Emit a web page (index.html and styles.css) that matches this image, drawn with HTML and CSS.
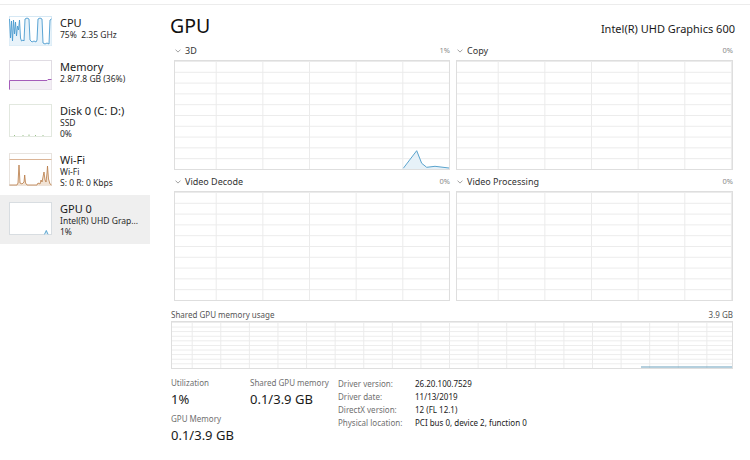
FILE: index.html
```html
<!DOCTYPE html>
<html>
<head>
<meta charset="utf-8">
<link rel="stylesheet" href="styles.css">
</head>
<body>
<div class="app">
  <aside class="sidebar">
    <div class="item">
      <svg class="thumb" width="43" height="30" viewBox="0 0 43 30">
        <rect x="0.5" y="0.5" width="42" height="29" fill="#fff" stroke="#d6e8f4"/>
        <polygon fill="#e8f3fa" points="0.5,29.5 0.5,3 1.5,22 2.5,5 3.5,25 4.5,4 5.5,18 6.5,6 7.5,20 8.5,10 9.5,14 10.5,4 11.5,22 12.5,25 14,24 15,25 16,3 18,2 20,3 21,24 23,26 25,25 27,26 28,24 29,3 31,2 33,3 34,27 36,28 38,27 40,28 41,4 42.5,3 42.5,29.5"/>
        <polyline fill="none" stroke="#4a9bcf" stroke-width="0.9" points="0.5,3 1.5,22 2.5,5 3.5,25 4.5,4 5.5,18 6.5,6 7.5,20 8.5,10 9.5,14 10.5,4 11.5,22 12.5,25 14,24 15,25 16,3 18,2 20,3 21,24 23,26 25,25 27,26 28,24 29,3 31,2 33,3 34,27 36,28 38,27 40,28 41,4 42.5,3"/>
      </svg>
      <div class="itext">
        <div class="ititle">CPU</div>
        <div class="isub">75%&nbsp; 2.35 GHz</div>
      </div>
    </div>
    <div class="item">
      <svg class="thumb" width="43" height="30" viewBox="0 0 43 30">
        <rect x="0.5" y="0.5" width="42" height="29" fill="#fff" stroke="#e0dce3"/>
        <polygon fill="#f3eef5" points="0.5,29.5 0.5,20.5 38,20.5 39,19.5 42.5,19.5 42.5,29.5"/>
        <polyline fill="none" stroke="#a55cba" stroke-width="1" points="0.5,29.5 0.5,20.5 38,20.5 39,19.5 42.5,19.5"/>
      </svg>
      <div class="itext">
        <div class="ititle">Memory</div>
        <div class="isub">2.8/7.8 GB (36%)</div>
      </div>
    </div>
    <div class="item">
      <svg class="thumb" width="43" height="33" viewBox="0 0 43 33">
        <rect x="0.5" y="0.5" width="42" height="32" fill="#fff" stroke="#e2e8df"/>
        <g stroke="#9cc48c" stroke-width="1">
          <line x1="5.5" y1="32" x2="5.5" y2="31"/>
          <line x1="14" y1="32" x2="14" y2="31"/>
          <line x1="20" y1="32" x2="20" y2="30.5"/>
          <line x1="26.5" y1="32" x2="26.5" y2="31"/>
          <line x1="34" y1="32" x2="34" y2="31"/>
        </g>
      </svg>
      <div class="itext">
        <div class="ititle">Disk 0 (C: D:)</div>
        <div class="isub">SSD</div>
        <div class="isub">0%</div>
      </div>
    </div>
    <div class="item">
      <svg class="thumb" width="43" height="33" viewBox="0 0 43 33">
        <rect x="0.5" y="0.5" width="42" height="32" fill="#fff" stroke="#e8e3de"/>
        <line x1="0.5" y1="6.5" x2="42.5" y2="6.5" stroke="#dbb597" stroke-width="1"/>
        <polygon fill="#f1e3d5" points="0.5,32.5 8,32 9,30 10,12 11,30 13,31 15,29 15.7,22 16.5,30 18,32 28,32 29,30 31,31 32,27 33,29 34,24 35,19 36,27 37,29 38,20 38.5,13 39.5,26 41,31 42.5,32 42.5,32.5"/>
        <polyline fill="none" stroke="#b77a45" stroke-width="0.8" points="0.5,32 8,32 9,30 10,12 11,30 13,31 15,29 15.7,22 16.5,30 18,32 28,32 29,30 31,31 32,27 33,29 34,24 35,19 36,27 37,29 38,20 38.5,13 39.5,26 41,31 42.5,32"/>
      </svg>
      <div class="itext">
        <div class="ititle">Wi-Fi</div>
        <div class="isub">Wi-Fi</div>
        <div class="isub">S: 0 R: 0 Kbps</div>
      </div>
    </div>
    <div class="item sel">
      <svg class="thumb" width="43" height="33" viewBox="0 0 43 33">
        <rect x="0.5" y="0.5" width="42" height="32" fill="#fff" stroke="#d8dde1"/>
        <polygon fill="#d8e9f4" points="36,32.5 37.3,28.5 38.6,32.5"/>
        <polyline fill="none" stroke="#4b9ccb" stroke-width="0.9" points="35.5,32.3 37.3,28.5 39,32.3"/>
      </svg>
      <div class="itext">
        <div class="ititle">GPU 0</div>
        <div class="isub">Intel(R) UHD Grap...</div>
        <div class="isub">1%</div>
      </div>
    </div>
  </aside>

  <main class="main">
    <div class="titlebar">
      <h1 class="title">GPU</h1>
      <div class="adapter">Intel(R) UHD Graphics 600</div>
    </div>

    <div class="engines">
      <section class="panel">
        <div class="phead">
          <span class="pname"><svg class="chev" width="6" height="4" viewBox="0 0 6 4"><path d="M0.5 0.6 L3 3.1 L5.5 0.6" fill="none" stroke="#8a8a8a" stroke-width="0.8"/></svg>3D</span>
          <span class="pval">1%</span>
        </div>
        <div class="graph">
          <svg class="gsvg" viewBox="0 0 274 108" preserveAspectRatio="none">
            <polygon fill="#e6f1f8" points="228.3,108 241.7,89.7 246.7,102.3 251.7,106.3 260,105.3 274,107 274,108"/>
            <polyline fill="none" stroke="#5aa3cd" stroke-width="1" points="228.3,107.3 241.7,89.7 246.7,102.3 251.7,106.3 260,105.3 274,107"/>
          </svg>
        </div>
      </section>
      <section class="panel">
        <div class="phead">
          <span class="pname"><svg class="chev" width="6" height="4" viewBox="0 0 6 4"><path d="M0.5 0.6 L3 3.1 L5.5 0.6" fill="none" stroke="#8a8a8a" stroke-width="0.8"/></svg>Copy</span>
          <span class="pval">0%</span>
        </div>
        <div class="graph"></div>
      </section>
      <section class="panel">
        <div class="phead">
          <span class="pname"><svg class="chev" width="6" height="4" viewBox="0 0 6 4"><path d="M0.5 0.6 L3 3.1 L5.5 0.6" fill="none" stroke="#8a8a8a" stroke-width="0.8"/></svg>Video Decode</span>
          <span class="pval">0%</span>
        </div>
        <div class="graph"></div>
      </section>
      <section class="panel">
        <div class="phead">
          <span class="pname"><svg class="chev" width="6" height="4" viewBox="0 0 6 4"><path d="M0.5 0.6 L3 3.1 L5.5 0.6" fill="none" stroke="#8a8a8a" stroke-width="0.8"/></svg>Video Processing</span>
          <span class="pval">0%</span>
        </div>
        <div class="graph"></div>
      </section>
    </div>

    <section class="shared">
      <div class="shead">
        <span>Shared GPU memory usage</span>
        <span>3.9 GB</span>
      </div>
      <div class="sgraph">
        <svg class="gsvg" viewBox="0 0 560 47" preserveAspectRatio="none">
          <line x1="469" y1="46" x2="560" y2="46" stroke="#6b9fbb" stroke-width="1.2"/>
        </svg>
      </div>
    </section>

    <div class="stats">
      <div class="scol c1">
        <div class="lbl">Utilization</div>
        <div class="val">1%</div>
        <div class="lbl gap">GPU Memory</div>
        <div class="val">0.1/3.9 GB</div>
      </div>
      <div class="scol c2">
        <div class="lbl">Shared GPU memory</div>
        <div class="val">0.1/3.9 GB</div>
      </div>
      <div class="props">
        <div class="pk">Driver version:</div><div class="pv">26.20.100.7529</div>
        <div class="pk">Driver date:</div><div class="pv">11/13/2019</div>
        <div class="pk">DirectX version:</div><div class="pv">12 (FL 12.1)</div>
        <div class="pk">Physical location:</div><div class="pv">PCI bus 0, device 2, function 0</div>
      </div>
    </div>
  </main>
</div>
</body>
</html>
```

FILE: styles.css
```css
html, body {
  margin: 0;
  padding: 0;
  background: #ffffff;
}
body {
  font-family: "Noto Sans", "Open Sans", sans-serif;
  color: #1a1a1a;
  width: 750px;
  height: 460px;
  overflow: hidden;
}
.app {
  display: flex;
  margin-top: 4px;
  border-top: 1px solid #ececec;
  height: 455px;
}

/* sidebar */
.sidebar {
  width: 150px;
  flex: none;
  padding-top: 4px;
}
.item {
  display: flex;
  align-items: flex-start;
  gap: 8px;
  padding: 7px 9px;
}
.item.sel {
  background: #efefef;
}
.thumb {
  display: block;
  flex: none;
}
.itext {
  display: flex;
  flex-direction: column;
}
.ititle {
  font-size: 11px;
  line-height: 13px;
  color: #1a1a1a;
}
.isub {
  font-size: 8.5px;
  line-height: 11px;
  color: #2a2a2a;
}

/* main */
.main {
  flex: 1;
  padding: 9px 17px 0 21px;
  display: flex;
  flex-direction: column;
}
.titlebar {
  display: flex;
  justify-content: space-between;
  align-items: baseline;
  margin-right: -2px;
}
.title {
  margin: 0 0 0 -1px;
  font-size: 19.5px;
  font-weight: 400;
  line-height: 24px;
  color: #111;
}
.adapter {
  font-size: 11px;
  color: #1a1a1a;
}
.engines {
  display: grid;
  grid-template-columns: 276px 277px;
  column-gap: 6px;
  row-gap: 5px;
  padding-left: 3px;
  margin-top: 6px;
}
.phead {
  display: flex;
  justify-content: space-between;
  align-items: baseline;
  height: 12px;
  margin-bottom: 4px;
}
.pname {
  font-size: 9px;
  line-height: 12px;
  color: #333;
  display: flex;
  align-items: center;
}
.chev {
  display: block;
  margin: 0 4px 0 1px;
}
.pval {
  font-size: 7.5px;
  line-height: 12px;
  color: #8a8a8a;
}
.graph {
  height: 110px;
  box-sizing: border-box;
  border: 1px solid #dedede;
  background-color: #fff;
  background-image:
    linear-gradient(90deg, #ebebeb 1px, transparent 1px),
    linear-gradient(180deg, #ebebeb 1px, transparent 1px);
  background-size: 46.67px 100%, 100% 10.8px;
  background-position: 40.7px 0, 0 0;
}
.gsvg {
  display: block;
  width: 100%;
  height: 100%;
}

/* shared memory */
.shared {
  margin-top: 8px;
}
.shead {
  display: flex;
  justify-content: space-between;
  font-size: 8px;
  line-height: 11px;
  color: #555;
  margin-bottom: 1px;
}
.sgraph {
  height: 48px;
  box-sizing: border-box;
  border: 1px solid #dedede;
  background-image:
    linear-gradient(90deg, #ebebeb 1px, transparent 1px),
    linear-gradient(180deg, #ebebeb 1px, transparent 1px);
  background-size: 28.6px 100%, 100% 4.6px;
  background-position: 19.7px 0, 0 0;
}

/* stats */
.stats {
  display: flex;
  align-items: flex-start;
  margin-top: 8px;
}
.scol {
  display: flex;
  flex-direction: column;
}
.c1 { width: 79px; }
.c2 { width: 88px; }
.lbl {
  font-size: 8px;
  line-height: 12px;
  color: #707070;
}
.lbl.gap {
  margin-top: 4px;
}
.val {
  font-size: 13px;
  line-height: 20px;
  color: #1a1a1a;
}
.props {
  display: grid;
  grid-template-columns: 77px auto;
  align-content: start;
  font-size: 8px;
  line-height: 13px;
}
.pk {
  color: #707070;
}
.pv {
  color: #1a1a1a;
}
```
